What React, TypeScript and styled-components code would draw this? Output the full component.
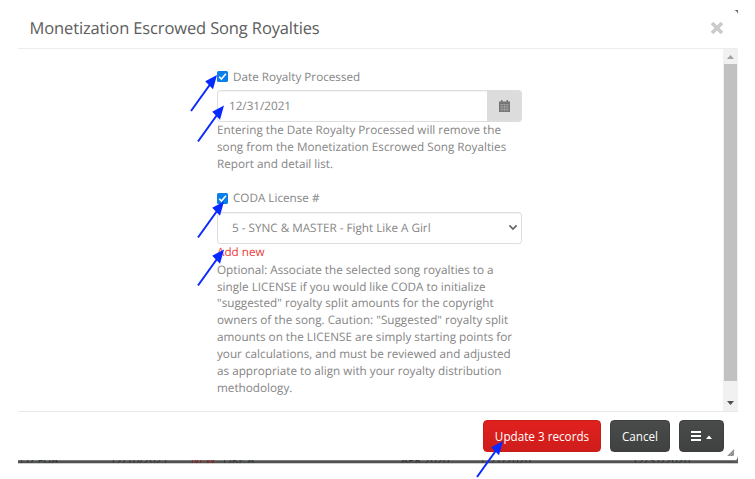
import React from "react";
import styled, { createGlobalStyle } from "styled-components";

const Global = createGlobalStyle`
  * { box-sizing: border-box; }
  body { margin: 0; background: #fff; overflow: hidden; font-family: "Open Sans", sans-serif; text-rendering: geometricPrecision; }
`;
const Page = styled.main`
  position: relative; width: 755px; height: 479px; padding: 10px 17px 0 18px; overflow: hidden;
`;
const Dialog = styled.section`
  width: 720px; height: 450px; display: flex; flex-direction: column; background: #fff;
`;
const Header = styled.header`
  height: 39px; flex: none; display: flex; align-items: center; justify-content: space-between;
  padding: 0 14px 3px 11.5px; border-bottom: 1px solid #ededed;
`;
const Title = styled.h1`
  margin: 0; font-size: 16.5px; line-height: 24px; font-weight: 400; letter-spacing: -0.13px; color: #5c5c5c; white-space: nowrap;
`;
const Corner = styled.svg`
  position: absolute; left: 734px; top: 10px;
`;
const Body = styled.div`
  flex: 1; min-height: 0; display: flex; justify-content: space-between;
`;
const Form = styled.form`
  width: 305px; margin-left: 199px; padding-top: 19px; font-size: 11.7px; color: #858585;
`;
const Check = styled.label<{ $top?: number }>`
  display: flex; align-items: center; gap: 5px; height: 17px; margin-top: ${(p) => p.$top ?? 0}px;
  white-space: nowrap;
`;
const Field = styled.div<{ $top: number; $pad: number }>`
  display: flex; align-items: center; height: 32px; margin-top: ${(p) => p.$top}px; padding-left: ${(p) => p.$pad}px;
  border: 1px solid #dedede; border-radius: 3px; overflow: hidden;
  box-shadow: inset 0 1px 1px #f3f3f3; white-space: nowrap;
`;
const Value = styled.span`
  flex: 1;
`;
const Addon = styled.span`
  width: 34px; height: 32px; display: grid; place-items: center; background: #dcdcdc;
`;
const Chevron = styled.svg`
  margin-right: 3px;
`;
const Help = styled.p`
  margin: 0; padding-top: 0.3px; font-size: 11.72px; line-height: 16.85px; white-space: nowrap;
`;
const HelpLine = styled.span`
  display: block;
`;
const AddLink = styled.a`
  display: block; height: 17.8px; line-height: 17px; color: #ed3b37;
`;
const Scrollbar = styled.div`
  width: 15px; display: flex; flex-direction: column; align-items: center; background: #f1f1f1;
`;
const Thumb = styled.div`
  width: 13px; height: 317px; background: #c1c1c1;
`;
const Footer = styled.footer`
  height: 49px; flex: none; display: flex; justify-content: flex-end; gap: 9px;
  padding: 8px 14px 0 0; border-top: 1px solid #e8e8e8;
`;
const Button = styled.button<{ $width: number; $primary?: boolean }>`
  width: ${(p) => p.$width}px; height: 32px; padding: 0 0 1px; border: 1px solid ${(p) => (p.$primary ? "#c91d1b" : "#3c3f3e")};
  border-radius: 4px; display: flex; align-items: center; justify-content: center;
  font: 400 11.7px "Open Sans", sans-serif; color: #fff; white-space: nowrap;
  background: ${(p) => (p.$primary ? "linear-gradient(#e0211e, #cf1d1b)" : "linear-gradient(#484b4a, #3f4241)")};
`;
const Backdrop = styled.div`
  position: relative; width: 720px; height: 4px; overflow: hidden;
  background: linear-gradient(#7c7c7c 0 1px, #515352 1px 3px, #cdcdcd 3px);
`;
const Behind = styled.span<{ $left: number; $color?: string }>`
  position: absolute; left: ${(p) => p.$left}px; top: -6px; height: 9px; overflow: hidden;
  font-size: 11px; line-height: 13px; white-space: nowrap; color: ${(p) => p.$color ?? "#303332"};
`;
const Grip = styled.svg`
  position: absolute; left: 726px; top: 448px;
`;
const Arrows = styled.svg`
  position: absolute; inset: 0; pointer-events: none;
`;

const Checkbox = () => (
  <svg width="11" height="11" viewBox="0 0 11 11">
    <rect width="11" height="11" rx="1.6" fill="#087fea" />
    <path d="M2.2 5.8 4.4 8 8.9 2.8" fill="none" stroke="#fff" strokeWidth="1.6" />
  </svg>
);

const dateHelp = [
  "Entering the Date Royalty Processed will remove the",
  "song from the Monetization Escrowed Song Royalties",
  "Report and detail list.",
];
const licenseHelp = [
  "Optional: Associate the selected song royalties to a",
  "single LICENSE if you would like CODA to initialize",
  '"suggested" royalty split amounts for the copyright',
  'owners of the song. Caution: "Suggested" royalty split',
  "amounts on the LICENSE are simply starting points for",
  "your calculations, and must be reviewed and adjusted",
  "as appropriate to align with your royalty distribution",
  "methodology.",
];
const tips = [[217, 75], [224, 105.5], [224, 201.5], [224, 249.5], [503, 441]];

export default function App() {
  return (
    <Page>
      <Global />
      <Dialog>
        <Header>
          <Title>Monetization Escrowed Song Royalties</Title>
          <svg width="14" height="14" viewBox="0 0 14 14">
            <path d="M2 2 12 12M12 2 2 12" stroke="#cbcbcb" strokeWidth="3.8" />
          </svg>
        </Header>
        <Body>
          <Form>
            <Check><Checkbox />Date Royalty Processed</Check>
            <Field $top={5} $pad={11}>
              <Value>12/31/2021</Value>
              <Addon>
                <svg width="11" height="12" viewBox="0 0 11 12">
                  <path d="M0 1.5h11V12H0zM2 0h1.5v3H2zM7.5 0H9v3H7.5z" fill="#757575" />
                  <path d="M1 4.5h9M1 7h9M1 9.5h9M3 4.5v7M5.5 4.5v7M8 4.5v7" stroke="#b4b4b4" strokeWidth=".5" />
                </svg>
              </Addon>
            </Field>
            <Help>{dateHelp.map((line) => <HelpLine key={line}>{line}</HelpLine>)}</Help>
            <Check $top={16.8}><Checkbox />CODA License #</Check>
            <Field $top={5} $pad={14}>
              <Value>5 - SYNC &amp; MASTER - Fight Like A Girl</Value>
              <Chevron width="10" height="7" viewBox="0 0 10 7">
                <path d="M1.4 1.4 5 5l3.6-3.6" fill="none" stroke="#666" strokeWidth="1.7" />
              </Chevron>
            </Field>
            <AddLink>Add new</AddLink>
            <Help>{licenseHelp.map((line) => <HelpLine key={line}>{line}</HelpLine>)}</Help>
          </Form>
          <Scrollbar>
            <svg width="15" height="15" viewBox="0 0 15 15"><path d="M4 10 7.5 6 11 10z" fill="#a3a3a3" /></svg>
            <Thumb />
            <svg width="15" height="30" viewBox="0 0 15 30"><path d="M4 20h7l-3.5 4z" fill="#505050" /></svg>
          </Scrollbar>
        </Body>
        <Footer>
          <Button $width={118} $primary>Update 3 records</Button>
          <Button $width={60}>Cancel</Button>
          <Button $width={45}>
            <svg width="22" height="12" viewBox="0 0 22 12">
              <path d="M0 2h10M0 6h10M0 10h10" stroke="#fff" strokeWidth="2" />
              <path d="M15 9h6l-3-3.5z" fill="#fff" />
            </svg>
          </Button>
        </Footer>
      </Dialog>
      <Backdrop>
        <Behind $left={0}>11/ FUA</Behind>
        <Behind $left={92}>12/10/2021</Behind>
        <Behind $left={173} $color="#8d1b1b">NEW</Behind>
        <Behind $left={205}>LIKE A</Behind>
        <Behind $left={383}>APR 2020</Behind>
        <Behind $left={461}>11/1/2020</Behind>
        <Behind $left={614}>12/31/2020</Behind>
      </Backdrop>
      <Corner width="4" height="4" viewBox="0 0 4 4"><path d="M0 0h4v4C3.5 2 2 .5 0 0z" fill="#666" /></Corner>
      <Grip width="12" height="14" viewBox="0 0 12 14">
        <path d="M1 8 8 1v7z" fill="#aaa" />
        <path d="M2.5 8 8 2.5M5 8l3-3" stroke="#777" />
        <path d="M12 8v6H8c2-1 3.5-3 4-6z" fill="#666" />
      </Grip>
      <Arrows width="755" height="479" viewBox="0 0 755 479">
        {tips.map(([x, y]) => (
          <g key={`${x}-${y}`} transform={`translate(${x} ${y})`}>
            <path d="M-26 36-7 9.5" stroke="#0829ff" strokeWidth="2" />
            <path d="M0 0-11.8 6.2-4 14.2z" fill="#0829ff" />
          </g>
        ))}
      </Arrows>
    </Page>
  );
}
